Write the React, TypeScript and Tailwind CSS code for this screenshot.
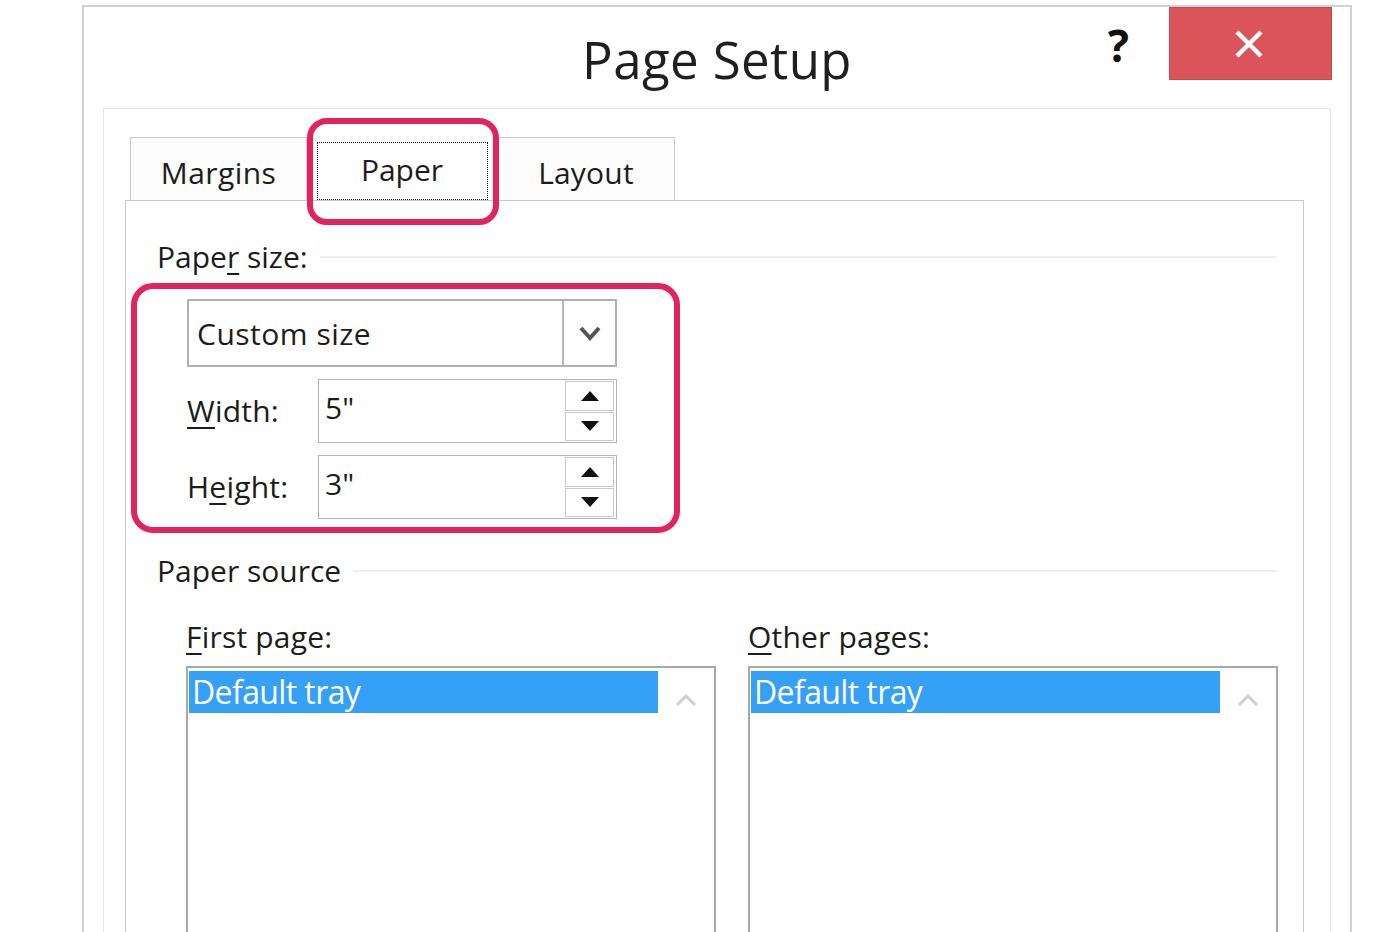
import React from "react";

const PINK = "border-[#e2245e]";

function Spinner() {
  return (
    <div className="flex flex-col gap-[1px] w-[49px] h-[60px] mr-[2px]">
      <div className="flex-1 border border-[#c9c9c9] flex items-center justify-center">
        <svg width="18" height="10" viewBox="0 0 18 10"><path d="M9 0 L18 10 L0 10 Z" fill="#111" /></svg>
      </div>
      <div className="flex-1 border border-[#c9c9c9] flex items-center justify-center">
        <svg width="18" height="10" viewBox="0 0 18 10"><path d="M0 0 L18 0 L9 10 Z" fill="#111" /></svg>
      </div>
    </div>
  );
}

function NumRow({ first, u, rest, value, mt }: { first: string; u: string; rest: string; value: string; mt: string }) {
  return (
    <div className={`flex items-center ${mt}`}>
      <div className="w-[131px] text-[30px] leading-[40px] tracking-[0.2px]">
        {first}
        <span className="underline underline-offset-[5px] decoration-[2px]">{u}</span>
        {rest}
      </div>
      <div className="w-[299px] h-[64px] border border-[#b4b4b4] flex items-center justify-between">
        <span className="pl-[6px] text-[30px] leading-[40px] -mt-[6px]">{value}</span>
        <Spinner />
      </div>
    </div>
  );
}

function ListBox() {
  return (
    <div className="w-[530px] h-[320px] border-2 border-[#a8a8a8] border-b-0 pt-[3px] pl-[1px] flex items-start">
      <div className="w-[469px] h-[42px] bg-[#34a0f6] text-white text-[32px] leading-[42px] tracking-[-0.6px] pl-[3px]">
        Default tray
      </div>
      <div className="flex-1 flex justify-center pt-[22px]">
        <svg width="22" height="14" viewBox="0 0 22 14"><path d="M2 12 L11 3 L20 12" fill="none" stroke="#cfcfcf" strokeWidth="3" /></svg>
      </div>
    </div>
  );
}

export default function App() {
  return (
    <div className="w-[1400px] h-[932px] overflow-hidden bg-white text-[#1c1c1c] font-['Open_Sans','Noto_Sans',sans-serif]">
      <div className="ml-[82px] mt-[5px] w-[1270px] h-[1000px] border-2 border-b-0 border-[#d2d2d2] flex flex-col">
        {/* Title bar */}
        <div className="grid grid-cols-[1fr_auto_1fr] h-[101px]">
          <div />
          <div className="text-[51px] leading-[60px] pt-[22px] tracking-[0.4px] text-[#1f1f1f]">Page Setup</div>
          <div className="flex justify-end items-start mr-[18px]">
            <div className="text-[44px] font-bold leading-[44px] mt-[16px] mr-[40px] text-[#111]">?</div>
            <div className="w-[163px] h-[73px] bg-[#db5459] border border-[#c44a4e] flex items-center justify-center pr-[4px]">
              <svg width="30" height="30" viewBox="0 0 30 30"><path d="M3 3 L27 27 M27 3 L3 27" stroke="white" strokeWidth="4.5" /></svg>
            </div>
          </div>
        </div>

        {/* Inner panel */}
        <div className="mx-[19px] flex-1 border border-[#e6e6e6] border-b-0 pt-[28px]">
          {/* Tabs */}
          <div className="flex ml-[26px] h-[63px] items-end">
            <div className="w-[177px] h-[63px] border border-b-0 border-[#cbcbcb] bg-[#fdfdfd] flex items-center justify-center text-[30px] tracking-[0.4px] pt-[6px]">
              Margins
            </div>
            <div className="relative w-[190px] h-[63px] flex items-center justify-center">
              <div className="w-[171px] h-[58px] mt-[5px] border border-dotted border-[#111] flex items-center justify-center text-[30px] pb-[4px]">
                Paper
              </div>
              <div className={`absolute left-[0px] top-[-19px] w-[192px] h-[107px] border-[6px] ${PINK} rounded-[20px]`} />
            </div>
            <div className="w-[178px] h-[63px] border border-b-0 border-[#cbcbcb] bg-[#fdfdfd] flex items-center justify-center text-[30px] tracking-[0.2px] pt-[6px]">
              Layout
            </div>
          </div>

          {/* Tab panel */}
          <div className="ml-[21px] w-[1179px] h-[800px] border border-b-0 border-[#c8c8c8]">
            {/* Paper size heading */}
            <div className="flex items-center mt-[36px] pl-[31px] pr-[26px]">
              <span className="text-[30px] leading-[40px]">
                Pape<span className="underline underline-offset-[5px] decoration-[2px]">r</span> size:
              </span>
              <div className="flex-1 h-[2px] bg-[#f0f0f0] ml-[12px]" />
            </div>

            {/* Highlighted group */}
            <div className={`ml-[5px] mt-[6px] w-[549px] h-[250px] border-[6px] ${PINK} rounded-[22px] pl-[50px] pt-[10px]`}>
              <div className="w-[430px] h-[68px] border-2 border-[#b0b0b0] flex items-stretch">
                <div className="flex-1 flex items-center pl-[8px] text-[30px] tracking-[0.5px]">Custom size</div>
                <div className="w-[53px] border-l-2 border-[#b8b8b8] flex items-center justify-center">
                  <svg width="22" height="16" viewBox="0 0 22 16"><path d="M2 3 L11 13 L20 3" fill="none" stroke="#555" strokeWidth="4" /></svg>
                </div>
              </div>
              <NumRow first="" u="W" rest="idth:" value={'5"'} mt="mt-[12px]" />
              <NumRow first="H" u="e" rest="ight:" value={'3"'} mt="mt-[12px]" />
            </div>

            {/* Paper source */}
            <div className="flex items-center mt-[18px] pl-[31px] pr-[26px]">
              <span className="text-[30px] leading-[40px]">Paper source</span>
              <div className="flex-1 h-[2px] bg-[#f0f0f0] ml-[12px]" />
            </div>

            <div className="flex gap-[32px] ml-[60px] mt-[26px]">
              <div>
                <div className="text-[30px] leading-[40px] tracking-[0.2px]">
                  <span className="underline underline-offset-[5px] decoration-[2px]">F</span>irst page:
                </div>
                <div className="mt-[9px]"><ListBox /></div>
              </div>
              <div>
                <div className="text-[30px] leading-[40px] tracking-[0.2px]">
                  <span className="underline underline-offset-[5px] decoration-[2px]">O</span>ther pages:
                </div>
                <div className="mt-[9px]"><ListBox /></div>
              </div>
            </div>
          </div>
        </div>
      </div>
    </div>
  );
}
